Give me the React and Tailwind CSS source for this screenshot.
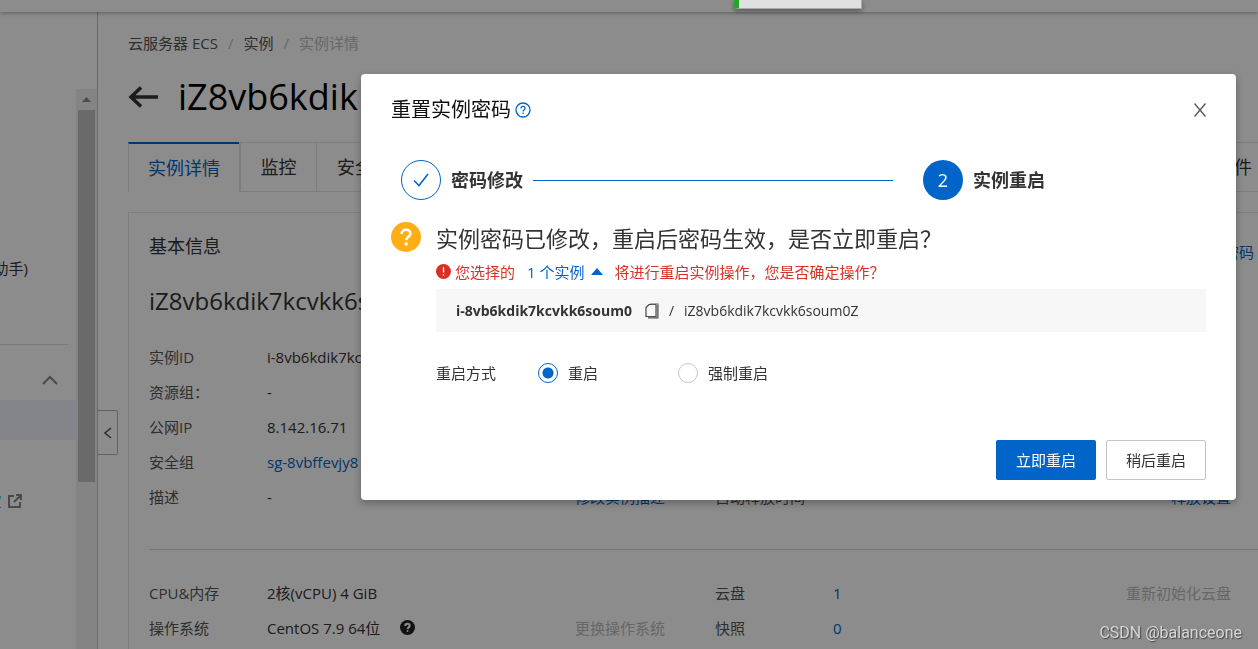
import React, { useState } from "react";

const basicRows = [
  { label: "实例ID", value: "i-8vb6kdik7kcvkk6soum0" },
  { label: "资源组：", value: "-" },
  { label: "公网IP", value: "8.142.16.71" },
  { label: "安全组", value: "sg-8vbffevjy8", link: true },
  {
    label: "描述",
    value: "-",
    action: "修改实例描述",
    right: { label: "自动释放时间", value: "", action: "释放设置" },
  },
];

const configRows = [
  {
    label: "CPU&内存",
    value: "2核(vCPU) 4 GiB",
    right: { label: "云盘", value: "1", link: true, action: "重新初始化云盘", disabled: true },
  },
  {
    label: "操作系统",
    value: "CentOS 7.9 64位",
    help: true,
    action: "更换操作系统",
    disabled: true,
    right: { label: "快照", value: "0", link: true },
  },
];

function QuestionIcon({ className, strokeWidth = 2.6 }) {
  return (
    <svg viewBox="0 0 30 30" className={className} aria-hidden="true">
      <circle cx="15" cy="15" r="15" fill="currentColor" />
      <path
        d="M10.600 12c0-2.700 1.900-4.300 4.400-4.300s4.400 1.500 4.400 3.900c0 3-4.200 3.300-4.200 6.600"
        fill="none"
        stroke="var(--mark)"
        strokeWidth={strokeWidth}
      />
      <circle cx="15.200" cy="22" r="1.800" fill="var(--mark)" />
    </svg>
  );
}

function Cell({ item }) {
  return (
    <div className="flex flex-1 items-center">
      <span className="w-[118px] shrink-0 text-[#555]">{item.label}</span>
      {item.link ? (
        <a href="#" className="text-[#0064c8]">
          {item.value}
        </a>
      ) : (
        <span className="text-[#333]">{item.value}</span>
      )}
      {item.help && (
        <QuestionIcon strokeWidth={4} className="ml-5 h-[15px] w-[15px] text-[#222] [--mark:#fff]" />
      )}
      {item.action && (
        <a
          href="#"
          className={`ml-auto ${item.disabled ? "text-[#bbb]" : "text-[#0064c8]"}`}
        >
          {item.action}
        </a>
      )}
    </div>
  );
}

function InfoRows({ rows }) {
  return (
    <div className="pr-[27px]">
      {rows.map((row) => (
        <div key={row.label} className="flex h-[35px] gap-[50px]">
          <Cell item={row} />
          {row.right ? <Cell item={row.right} /> : <div className="flex-1" />}
        </div>
      ))}
    </div>
  );
}

function Sidebar() {
  return (
    <aside className="flex w-[98px] shrink-0 border-r border-[#c0c0c0]">
      <nav className="w-[76px] overflow-hidden pt-[238px] whitespace-nowrap">
        <a href="#" className="flex h-10 items-center justify-end pr-12 pb-1 text-[#333]">
          助手)
        </a>
        <div className="mt-[54px] mr-2 border-t border-[#ddd]" />
        <button className="mt-[15px] flex h-10 w-full items-center justify-end pr-[18px]" aria-label="收起分组">
          <svg viewBox="0 0 16 10" className="h-[10px] w-4" fill="none" stroke="#888" strokeWidth="2">
            <path d="M1 9l7-7 7 7" />
          </svg>
        </button>
        <div className="h-10 bg-[#eff3fb]" />
        <a href="#" className="mt-[41px] flex h-10 items-center justify-end gap-[7px] pr-[54px] text-[#0064c8]">
          监控
          <svg viewBox="0 0 14 14" className="h-[14px] w-[14px] shrink-0" fill="none" stroke="#888" strokeWidth="2">
            <path d="M6 2H1v11h11V8M8 1h5v5M13 1L6 8" />
          </svg>
        </a>
      </nav>
      <div className="mt-[77px] flex flex-1 flex-col bg-[#f1f1f1] px-[2px]">
        <div className="flex h-[21px] items-center justify-center">
          <svg viewBox="0 0 9 5" className="h-[5px] w-[9px]" fill="#888">
            <path d="M0 5L4.500 0L9 5z" />
          </svg>
        </div>
        <div className="h-[372px] bg-[#c1c1c1]" />
      </div>
    </aside>
  );
}

function InstancePage() {
  return (
    <main className="flex min-w-0 flex-1 flex-col pl-[10px]">
      <div className="mt-[21px] flex h-5 items-center gap-[10px]">
        <a href="#" className="text-[#555]">云服务器 ECS</a>
        <span className="text-[#bbb]">/</span>
        <a href="#" className="text-[#555]">实例</a>
        <span className="text-[#bbb]">/</span>
        <span className="text-[#bbb]">实例详情</span>
      </div>
      <div className="mt-5 flex h-12 items-center gap-5">
        <button aria-label="返回">
          <svg viewBox="0 0 30 22" className="h-[22px] w-[30px]" fill="none" stroke="#333" strokeWidth="3.500">
            <path d="M30 11H3M13 1.500L3 11l10 9.500" />
          </svg>
        </button>
        <h1 className="text-4xl text-black">iZ8vb6kdik</h1>
      </div>
      <div className="mt-[21px] flex h-[50px] text-lg text-[#333]">
        <button className="w-[111px] border-t-2 border-l border-t-[#0064c8] border-l-[#e3e4e6] text-[#0064c8]">
          实例详情
        </button>
        <button className="w-[78px] border border-l-2 border-[#e3e4e6]">监控</button>
        <button className="border-y border-[#e3e4e6] pl-5">安全组</button>
        <div className="flex-1 border-y border-[#e3e4e6]" />
        <button className="border-y border-[#e3e4e6] pr-[6px]">事件</button>
      </div>
      <section className="mt-5 flex-1 border-t border-l border-[#e3e4e6] pl-5 text-[#333]">
        <div className="flex h-[66px] items-center justify-between pr-1">
          <h2 className="text-lg">基本信息</h2>
          <a href="#" className="pt-3 text-[#0064c8]">重置密码</a>
        </div>
        <div className="flex h-[60px] items-center pb-4 text-2xl">iZ8vb6kdik7kcvkk6s</div>
        <InfoRows rows={basicRows} />
        <hr className="mt-[35px] mb-[25px] border-[#d5d5d5]" />
        <InfoRows rows={configRows} />
      </section>
    </main>
  );
}

function Steps() {
  return (
    <ol className="mt-[35px] flex items-center pl-[10px] text-lg font-bold text-[#333]">
      <li className="flex flex-1 items-center gap-[10px]">
        <span className="flex h-10 w-10 items-center justify-center rounded-full border border-[#0064c8]">
          <svg viewBox="0 0 16 14" className="h-[14px] w-4" fill="none" stroke="#0064c8" strokeWidth="1.500">
            <path d="M1 7.500l5 5L15 1" />
          </svg>
        </span>
        密码修改
        <span className="mr-[30px] h-px flex-1 bg-[#0064c8]" />
      </li>
      <li className="flex w-[283px] items-center gap-[10px]">
        <span className="flex h-10 w-10 items-center justify-center rounded-full bg-[#0064c8] font-normal text-white">
          2
        </span>
        实例重启
      </li>
    </ol>
  );
}

function ResetDialog() {
  const [restartType, setRestartType] = useState("normal");

  const radioClass =
    "h-5 w-5 appearance-none rounded-full border border-[#c0c6cc] bg-white checked:border-[#0064c8] checked:bg-[radial-gradient(circle,#0064c8_5px,transparent_6px)]";

  return (
    <div
      role="dialog"
      aria-label="重置实例密码"
      className="w-full max-w-[875px] rounded-[4px] bg-white px-[30px] pt-5 pb-5 shadow-[0_3px_8px_rgba(0,0,0,0.3)]"
    >
      <div className="flex h-[31px] items-center">
        <h2 className="text-xl text-[#111]">重置实例密码</h2>
        <svg viewBox="0 0 16 16" className="ml-1 h-4 w-4" fill="none" stroke="#0064c8" strokeWidth="1.300">
          <circle cx="8" cy="8" r="7" />
          <path d="M5.900 6.400c0-1.300.9-2.100 2.100-2.100s2.100.8 2.100 1.900c0 1.500-2 1.600-2 3.200M8.100 10.600v1.400" />
        </svg>
        <button className="ml-auto" aria-label="关闭">
          <svg viewBox="0 0 12 14" className="h-[14px] w-3" fill="none" stroke="#555" strokeWidth="1.300">
            <path d="M.5.500l11 13M11.500.500l-11 13" />
          </svg>
        </button>
      </div>

      <Steps />

      <div className="mt-[22px] flex gap-[15px]">
        <QuestionIcon className="h-[30px] w-[30px] shrink-0 text-[#ffae15] [--mark:#fff]" />
        <div className="flex-1 text-[#333]">
          <h3 className="text-[22px] leading-8">
            实例密码已修改，重启后密码生效，是否立即重启？
          </h3>
          <div className="flex h-[35px] items-center text-[#d93026]">
            <svg viewBox="0 0 16 16" className="mr-1 h-[15px] w-[15px]">
              <circle cx="8" cy="8" r="8" fill="#d93026" />
              <path d="M8 3.500v5.500M8 10.800v1.500" stroke="#fff" strokeWidth="1.400" />
            </svg>
            您选择的
            <button className="mx-3 flex items-center gap-[6px] text-[#0064c8]">
              1 个实例
              <svg viewBox="0 0 12 7" className="h-[7px] w-3" fill="#0064c8">
                <path d="M0 7l6-7 6 7z" />
              </svg>
            </button>
            将进行重启实例操作，您是否确定操作？
          </div>
          <div className="flex h-[43px] items-center bg-[#f7f7f7] pl-5 text-sm">
            <b>i-8vb6kdik7kcvkk6soum0</b>
            <button className="ml-[13px]" aria-label="复制">
              <svg viewBox="0 0 14 16" className="h-4 w-[14px]" fill="none" stroke="#444">
                <path d="M4 1.500h7v12H1V4.500z" strokeWidth="1.200" />
                <path d="M5 .8h8.300v14.400H3" strokeWidth="1" stroke="#888" />
                <path d="M12.300 1.500v13H3" strokeWidth="1.400" stroke="#777" />
              </svg>
            </button>
            <span className="mx-[10px]">/</span>
            <span>iZ8vb6kdik7kcvkk6soum0Z</span>
          </div>
          <div className="mt-[30px] flex h-[22px] items-center">
            <span className="w-[102px]">重启方式</span>
            <label className="flex w-[140px] items-center gap-[10px]">
              <input
                type="radio"
                name="restart"
                className={radioClass}
                checked={restartType === "normal"}
                onChange={() => setRestartType("normal")}
              />
              重启
            </label>
            <label className="flex items-center gap-[10px]">
              <input
                type="radio"
                name="restart"
                className={radioClass}
                checked={restartType === "force"}
                onChange={() => setRestartType("force")}
              />
              强制重启
            </label>
          </div>
        </div>
      </div>

      <div className="mt-14 flex justify-end gap-[10px]">
        <button className="h-10 w-[100px] rounded-[2px] bg-[#0064c8] text-white">立即重启</button>
        <button className="h-10 w-[100px] rounded-[2px] border border-[#c0c6cc] text-[#333]">稍后重启</button>
      </div>
    </div>
  );
}

export default function App() {
  return (
    <div className="flex h-screen flex-col overflow-hidden bg-white font-['Open_Sans','Noto_Sans_CJK_SC',sans-serif] text-[15px] leading-5">
      <header className="z-10 h-3 shrink-0 bg-white shadow-[0_1px_4px_rgba(0,0,0,0.35)]" />
      <div className="flex flex-1">
        <Sidebar />
        <button
          className="mt-[398px] flex h-[45px] w-5 items-center justify-center rounded-r-[2px] border border-l-0 border-[#b0b4b8]"
          aria-label="收起侧栏"
        >
          <svg viewBox="0 0 8 12" className="h-3 w-2" fill="none" stroke="#555" strokeWidth="1.500">
            <path d="M7 1L1 6l6 5" />
          </svg>
        </button>
        <InstancePage />
      </div>

      <div className="fixed inset-0 z-20 flex items-start justify-end bg-black/45 pt-[74px] pr-[22px]">
        <ResetDialog />
      </div>
      <div className="fixed top-0 left-[734px] z-30 h-[9px] w-32 border-r border-b border-l-[5px] border-[#aaa] border-l-[#27a327] bg-[#e0e0e0] shadow-[0_2px_5px_rgba(0,0,0,0.4)]" />
      <div className="fixed right-4 bottom-[6px] z-30 font-['Roboto',sans-serif] text-base leading-5 text-[#d6d6d6] [text-shadow:1px_1px_1px_#444]">
        CSDN @balanceone
      </div>
    </div>
  );
}
